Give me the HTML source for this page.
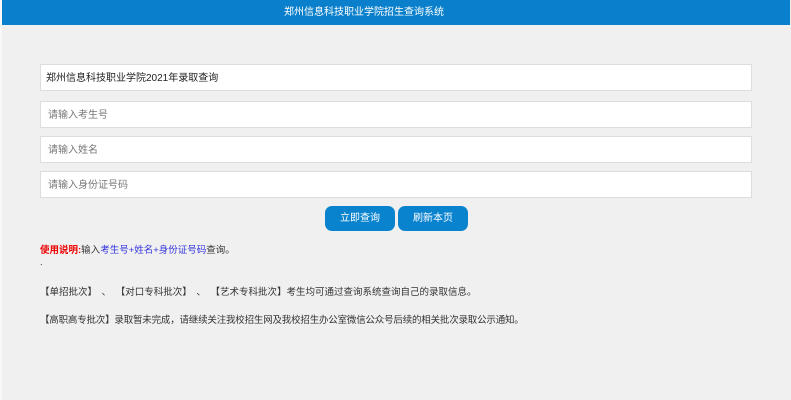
<!DOCTYPE html>
<html><head><meta charset="utf-8"><style>
body{margin:0;width:791px;height:400px;background:#f0f0f0;font-family:"Liberation Sans","Noto Sans CJK SC",sans-serif;position:relative;overflow:hidden}
.edge{position:absolute;left:0;top:0;width:2px;height:400px;background:#f8f8f8}
.hdr{position:absolute;left:2px;top:0;width:788px;height:25px;background:#0a80cc}
.hdr span{position:absolute;left:282px;top:0;color:#fff;font-size:10px;line-height:25px;white-space:nowrap}
.in{position:absolute;left:40px;width:710px;height:25px;background:#fff;border:1px solid #ddd;font-size:10px;line-height:27px;box-sizing:content-box}
.in span{padding-left:7px}
.btn{position:absolute;top:206px;width:70px;height:25px;background:#0a83cf;color:#fff;border-radius:7px;font-size:10px;line-height:25px;text-align:center}
.t{position:absolute;left:40px;font-size:9.5px;color:#333;white-space:nowrap}
</style></head><body>
<div class="edge"></div>
<div class="hdr"><span>郑州信息科技职业学院招生查询系统</span></div>
<div class="in" style="top:64px"><span style="padding-left:5px;color:#222">郑州信息科技职业学院2021年录取查询</span></div>
<div class="in" style="top:101px"><span style="color:#777">请输入考生号</span></div>
<div class="in" style="top:136px"><span style="color:#777">请输入姓名</span></div>
<div class="in" style="top:171px"><span style="color:#777">请输入身份证号码</span></div>
<div class="btn" style="left:325px">立即查询</div>
<div class="btn" style="left:398px">刷新本页</div>
<div class="t" style="top:242px"><b style="color:#e00;font-weight:bold">使用说明:</b>输入<span style="color:#33d">考生号+姓名+身份证号码</span>查询。</div>
<div class="t" style="top:257px">.</div>
<div class="t" style="top:284px;word-spacing:2px">【单招批次】 、 【对口专科批次】 、 【艺术专科批次】考生均可通过查询系统查询自己的录取信息。</div>
<div class="t" style="top:312px;letter-spacing:-0.2px">【高职高专批次】录取暂未完成，请继续关注我校招生网及我校招生办公室微信公众号后续的相关批次录取公示通知。</div>
</body></html>
